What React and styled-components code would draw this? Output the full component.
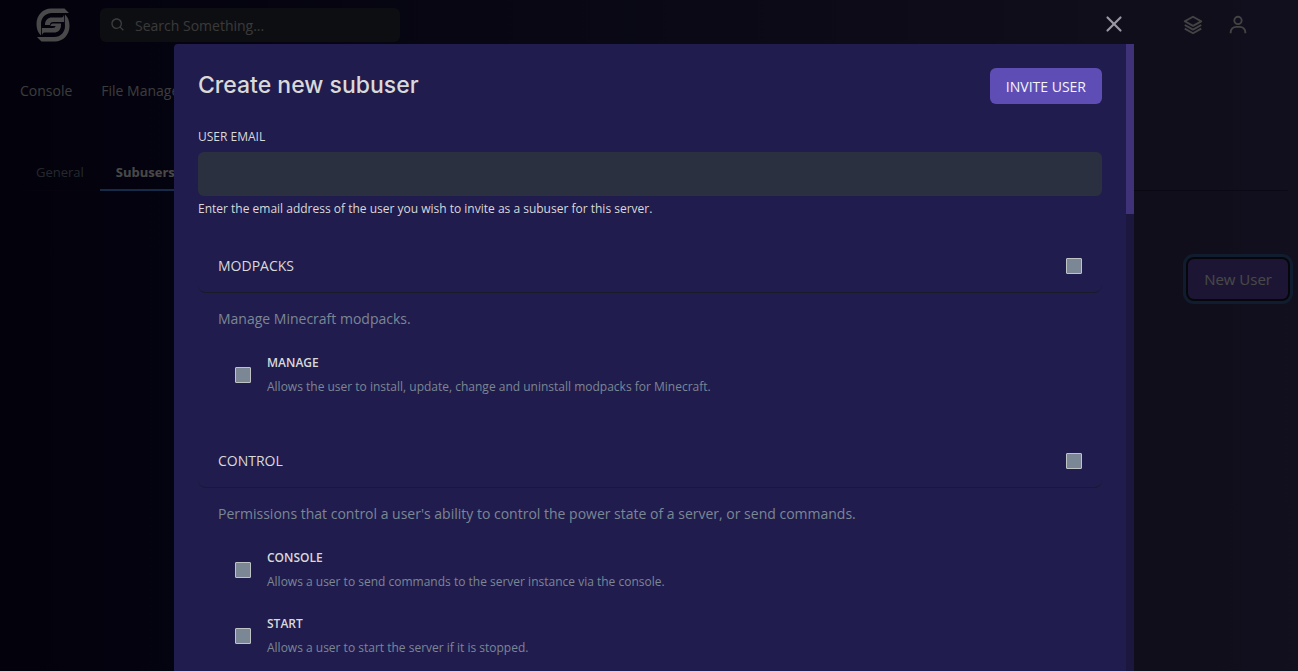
import React, { useState } from "react";
import styled, { createGlobalStyle } from "styled-components";
import { BiLayer, BiSearch, BiUser } from "react-icons/bi";
import { X } from "lucide-react";

const GlobalStyle = createGlobalStyle`
  *, *::before, *::after {
    box-sizing: border-box;
  }

  body {
    margin: 0;
    color: #cacaca;
    background: #0e0a34;
    font-family: "Open Sans", "Noto Sans", sans-serif;
    font-size: 14px;
    line-height: 20px;
  }

  h1, h2, h3, p {
    margin: 0;
    font-weight: 400;
  }

  button, input {
    font-family: inherit;
  }
`;

const Page = styled.div`
  min-height: 100vh;
  padding: 0 10px 0 20px;
  background: linear-gradient(90deg, #0a0628 0%, #0e0a34 14%, #37305a 86%, #3c3264 100%);
`;

const TopBar = styled.header`
  display: flex;
  align-items: center;
  height: 50px;
  padding: 0 39px 0 16px;
`;

const LogoLink = styled.a`
  display: flex;
  margin-right: 30px;
  color: #f4f4f4;
`;

const SearchBox = styled.label`
  display: flex;
  align-items: center;
  gap: 9px;
  width: 300px;
  height: 34px;
  padding: 0 10px;
  border-radius: 6px;
  background: #2b2f3c;
  color: #c8c8c8;
`;

const SearchInput = styled.input`
  flex: 1;
  min-width: 0;
  padding: 0;
  border: 0;
  outline: 0;
  background: none;
  color: inherit;
  font-size: 14px;

  &::placeholder {
    color: #c0c0c0;
    opacity: 1;
  }
`;

const TopActions = styled.div`
  display: flex;
  gap: 23px;
  margin-left: auto;
`;

const IconButton = styled.button`
  display: flex;
  padding: 0;
  border: 0;
  background: none;
  color: #e0e0e0;
  cursor: pointer;
`;

const MainNav = styled.nav`
  display: flex;
  gap: 29px;
  padding: 31px 0;
`;

const NavLink = styled.a`
  color: #c8c8c8;
  font-size: 14px;
  text-decoration: none;
`;

const Tabs = styled.nav`
  display: flex;
  margin-top: 21px;
  border-bottom: 1px solid rgba(20, 16, 50, 0.6);
`;

const Tab = styled.a`
  height: 38px;
  padding: 9px 16px 7px;
  margin-bottom: -1px;
  border-bottom: 2px solid ${({ $active }) => ($active ? "#4a90f0" : "transparent")};
  color: ${({ $active }) => ($active ? "#f2f2f2" : "#7b8794")};
  font-size: 13px;
  font-weight: ${({ $active }) => ($active ? 700 : 500)};
  text-decoration: none;
`;

const Actions = styled.div`
  display: flex;
  justify-content: flex-end;
  padding-top: 68px;
`;

const NewUserButton = styled.button`
  height: 40px;
  padding: 0 16px;
  border: 0;
  border-radius: 6px;
  background: #5e48ae;
  color: #f0f0f0;
  font-size: 15px;
  box-shadow: 0 0 0 2px #1a1428, 0 0 0 5px #38639e;
  cursor: pointer;
`;

const Overlay = styled.div`
  position: fixed;
  inset: 0;
  display: flex;
  justify-content: center;
  padding-left: 10px;
  background: rgba(0, 0, 0, 0.7);
`;

const Dialog = styled.div`
  display: flex;
  flex-direction: column;
  width: 100%;
  max-width: 960px;
  height: 100%;
`;

const CloseRow = styled.div`
  display: flex;
  justify-content: flex-end;
  padding: 11px 7px 7px;
`;

const CloseButton = styled(IconButton)`
  color: #9a99a2;
`;

const Panel = styled.div`
  display: flex;
  flex: 1;
  min-height: 0;
  border-radius: 4px 0 0 0;
  background: #211c4e;
  overflow: hidden;
`;

const Form = styled.form`
  flex: 1;
  min-width: 0;
  padding: 24px;
  overflow: hidden;
`;

const ScrollTrack = styled.div`
  width: 8px;
  background: #1c173f;
`;

const ScrollThumb = styled.div`
  height: 170px;
  background: #3f3279;
`;

const FormHeader = styled.div`
  display: flex;
  align-items: flex-start;
  justify-content: space-between;
  margin-bottom: 23px;
`;

const Title = styled.h2`
  color: #d9d9d9;
  font-family: Inter, "Open Sans", sans-serif;
  font-size: 23px;
  font-weight: 500;
  line-height: 34px;
`;

const InviteButton = styled.button`
  height: 36px;
  padding: 0 16px;
  border: 0;
  border-radius: 6px;
  background: #5f4db6;
  color: #f5f5fa;
  font-size: 14px;
  text-transform: uppercase;
  cursor: pointer;
`;

const FieldLabel = styled.label`
  display: block;
  margin-bottom: 5px;
  color: #d9d9d9;
  font-size: 12px;
  text-transform: uppercase;
`;

const TextField = styled.input`
  display: block;
  width: 100%;
  height: 44px;
  padding: 12px;
  border: 0;
  border-radius: 6px;
  outline: 0;
  background: #2b3041;
  color: #d9d9d9;
  font-size: 14px;
`;

const FieldHelp = styled.p`
  margin: 3px 0 21px;
  color: #d9d9d9;
  font-size: 12px;
`;

const Section = styled.section`
  padding-bottom: 27px;
`;

const SectionHeader = styled.label`
  display: flex;
  align-items: center;
  justify-content: space-between;
  padding: 16px 20px;
  border-bottom: 1px solid #1a1a2a;
  border-radius: 8px;
`;

const SectionTitle = styled.span`
  color: #d9d9d9;
  font-size: 14px;
  text-transform: uppercase;
`;

const SectionText = styled.p`
  padding: 16px 20px 13px;
  color: #7b8794;
  font-size: 14px;
`;

const Checkbox = styled.input`
  appearance: none;
  flex: none;
  width: 16px;
  height: 16px;
  margin: 0;
  border: 1px solid #c0c3c5;
  border-radius: 1px;
  background: #7b8794;

  &:checked {
    background: #5f4db6;
  }
`;

const Permission = styled.label`
  display: flex;
  align-items: center;
  gap: 16px;
  margin: 0 20px;
  padding: 11px 16px;
  border: 1px solid transparent;
  border-radius: 4px;
  font-size: 12px;
  line-height: 18px;
`;

const PermissionBody = styled.span`
  display: grid;
  gap: 6px;
`;

const PermissionName = styled.span`
  color: #d9d9d9;
  font-weight: 600;
  text-transform: uppercase;
`;

const PermissionText = styled.span`
  color: #7b8794;
`;

const permissionGroups = [
  {
    name: "Modpacks",
    description: "Manage Minecraft modpacks.",
    permissions: [
      {
        key: "manage",
        text: "Allows the user to install, update, change and uninstall modpacks for Minecraft.",
      },
    ],
  },
  {
    name: "Control",
    description:
      "Permissions that control a user's ability to control the power state of a server, or send commands.",
    permissions: [
      { key: "console", text: "Allows a user to send commands to the server instance via the console." },
      { key: "start", text: "Allows a user to start the server if it is stopped." },
    ],
  },
];

const Logo = () => (
  <svg width="34" height="34" viewBox="0 0 34 34" fill="currentColor" aria-hidden="true">
    <path d="M15 0.500H28.500L33 5H16C9 5 5 10 5 16C5 20 5.500 22 5 27.500C2 25 0.500 21 0.500 16C0.500 7 7 0.500 15 0.500Z" />
    <path d="M19 33.500H5.500L1 29H18C25 29 29 24 29 18C29 14 28.500 12 29 6.500C32 9 33.500 13 33.500 18C33.500 27 27 33.500 19 33.500Z" />
    <path d="M16 9.500H25.500C27 9.500 27.500 8 28 7V14H17.500C15 14 14 15 14 17H9C9 12 12 9.500 16 9.500Z" />
    <path d="M18 24.500H8.500C7 24.500 6.500 26 6 27V20H16.500C18.500 20 19.500 19 19.500 18H14.500C14.500 16.500 15.500 15.500 17 15.500H25V17C25 22 22 24.500 18 24.500Z" />
  </svg>
);

const PermissionGroup = ({ name, description, permissions }) => {
  const [selected, setSelected] = useState([]);
  const allSelected = selected.length === permissions.length;

  const toggleAll = () => setSelected(allSelected ? [] : permissions.map((p) => p.key));

  const toggle = (key) =>
    setSelected(selected.includes(key) ? selected.filter((k) => k !== key) : [...selected, key]);

  return (
    <Section>
      <SectionHeader>
        <SectionTitle>{name}</SectionTitle>
        <Checkbox type="checkbox" checked={allSelected} onChange={toggleAll} />
      </SectionHeader>
      <SectionText>{description}</SectionText>
      {permissions.map(({ key, text }) => (
        <Permission key={key}>
          <Checkbox type="checkbox" checked={selected.includes(key)} onChange={() => toggle(key)} />
          <PermissionBody>
            <PermissionName>{key}</PermissionName>
            <PermissionText>{text}</PermissionText>
          </PermissionBody>
        </Permission>
      ))}
    </Section>
  );
};

const App = () => (
  <>
    <GlobalStyle />
    <Page>
      <TopBar>
        <LogoLink href="#" aria-label="Home">
          <Logo />
        </LogoLink>
        <SearchBox>
          <BiSearch size={16} />
          <SearchInput type="search" placeholder="Search Something..." />
        </SearchBox>
        <TopActions>
          <IconButton aria-label="Servers">
            <BiLayer size={22} />
          </IconButton>
          <IconButton aria-label="Account">
            <BiUser size={22} />
          </IconButton>
        </TopActions>
      </TopBar>
      <MainNav>
        <NavLink href="#console">Console</NavLink>
        <NavLink href="#files">File Manager</NavLink>
      </MainNav>
      <Tabs>
        <Tab href="#general">General</Tab>
        <Tab href="#subusers" $active>
          Subusers
        </Tab>
      </Tabs>
      <Actions>
        <NewUserButton type="button">New User</NewUserButton>
      </Actions>
    </Page>
    <Overlay>
      <Dialog role="dialog" aria-modal="true" aria-labelledby="dialog-title">
        <CloseRow>
          <CloseButton type="button" aria-label="Close">
            <X size={26} strokeWidth={2} />
          </CloseButton>
        </CloseRow>
        <Panel>
          <Form onSubmit={(e) => e.preventDefault()}>
            <FormHeader>
              <Title id="dialog-title">Create new subuser</Title>
              <InviteButton type="submit">Invite User</InviteButton>
            </FormHeader>
            <FieldLabel htmlFor="email">User Email</FieldLabel>
            <TextField id="email" type="email" />
            <FieldHelp>
              Enter the email address of the user you wish to invite as a subuser for this server.
            </FieldHelp>
            {permissionGroups.map((group) => (
              <PermissionGroup key={group.name} {...group} />
            ))}
          </Form>
          <ScrollTrack>
            <ScrollThumb />
          </ScrollTrack>
        </Panel>
      </Dialog>
    </Overlay>
  </>
);

export default App;
